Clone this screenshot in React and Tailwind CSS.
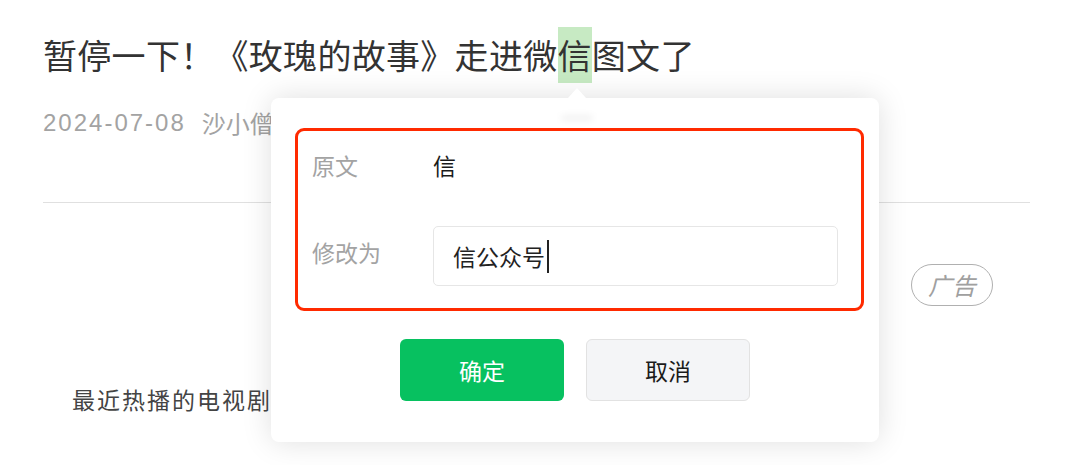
import React from 'react';

const cjk = { fontFamily: '"Noto Sans CJK SC", "Noto Sans", sans-serif' };
const latin = { fontFamily: '"Liberation Sans", "Noto Sans CJK SC", sans-serif' };

function EditPopover() {
  return (
    <div className="absolute left-[271px] top-[98px] w-[608px] rounded-[8px] bg-white shadow-[0_0_30px_rgba(0,0,0,0.13)]">
      {/* arrow */}
      <div className="absolute -top-[10px] left-[297px] h-0 w-0 border-x-[9px] border-b-[10px] border-x-transparent border-b-white" />
      <div className="absolute left-[290px] top-[17px] h-[6px] w-[32px] rounded-full bg-black/5 blur-[3px]" />

      <div className="ml-[24px] mr-[15px] mt-[30px] rounded-[9px] border-[3px] border-[#ff2a00] px-[14px] pb-[22px]">
        <div className="flex h-[68px] items-center">
          <span className="w-[121px] text-[23px] text-[#a3a3a3]">原文</span>
          <span className="text-[23px] text-[#1a1a1a]">信</span>
        </div>
        <div className="mt-[27px] flex items-start">
          <span className="mt-[10px] w-[121px] text-[23px] leading-[32px] text-[#a3a3a3]">
            修改为
          </span>
          <div className="flex h-[60px] w-[405px] items-center rounded-[5px] border border-[#e6e6e6] pl-[19px]">
            <span className="text-[23px] leading-[32px] text-[#222]">信公众号</span>
            <span className="ml-[2px] h-[33px] w-[2px] bg-[#222]" />
          </div>
        </div>
      </div>

      <div className="mb-[41px] mt-[28px] flex justify-center gap-[22px]">
        <button className="h-[62px] w-[164px] rounded-[6px] bg-[#07c160] text-[23px] font-normal text-white">
          确定
        </button>
        <button className="h-[62px] w-[164px] rounded-[6px] border border-[#e2e2e2] bg-[#f4f5f7] text-[23px] font-normal text-[#1a1a1a]">
          取消
        </button>
      </div>
    </div>
  );
}

export default function App() {
  return (
    <div className="relative h-[465px] w-[1080px] overflow-hidden bg-white" style={cjk}>
      <div className="pl-[43px] pr-[50px]">
        <h1 className="mt-[27px] text-[34px] font-normal leading-[56px] tracking-[0.3px] text-[#333]">
          暂停一下！《玫瑰的故事》走进微
          <span className="inline-block bg-[#c7eac3]">信</span>
          图文了
        </h1>

        <div className="mt-[24px] flex items-center leading-[32px] text-[#a3a3a3]">
          <span className="text-[24px] tracking-[2px]" style={latin}>
            2024-07-08
          </span>
          <span className="ml-[16px] text-[24px]">沙小僧</span>
        </div>

        <div className="mt-[63px] h-px bg-[#e0e0e0]" />

        <div className="mt-[61px] flex justify-end pr-[37px]">
          <span className="flex h-[42px] w-[82px] items-center justify-center rounded-full border-[1.5px] border-[#b0b0b0] text-[24px] italic text-[#a0a0a0]">
            广告
          </span>
        </div>

        <p className="ml-[29px] mt-[77px] text-[23px] leading-[32px] tracking-[2px] text-[#444]">
          最近热播的电视剧，你看了吗
        </p>
      </div>

      <EditPopover />
    </div>
  );
}
